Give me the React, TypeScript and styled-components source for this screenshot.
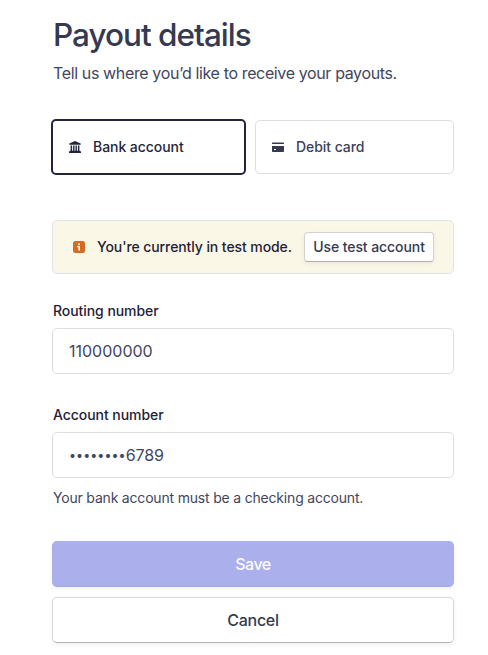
import React from 'react';
import styled, { createGlobalStyle, css } from 'styled-components';

const GlobalStyle = createGlobalStyle`
  * { box-sizing: border-box; }
  body { margin: 0; background: #fff; }
  button, input { font: inherit; color: inherit; margin: 0; letter-spacing: inherit; }
`;

const Page = styled.main`
  width: 488px;
  height: 655px;
  padding: 14px 34px 0 52px;
  overflow: hidden;
  display: flex;
  flex-direction: column;
  background: #fff;
  color: #353a50;
  font-family: Inter, 'Liberation Sans', sans-serif;
`;

const Title = styled.h1`
  margin: 0 0 0 1px;
  font-size: 31.5px;
  line-height: 42px;
  font-weight: 500;
  letter-spacing: -1px;
  color: #353a50;
  white-space: nowrap;
`;

const Subtitle = styled.p`
  margin: 5px 0 0 1px;
  font-size: 16px;
  line-height: 24px;
  letter-spacing: -0.37px;
  color: #414660;
  white-space: nowrap;
`;

const Methods = styled.div`
  display: flex;
  gap: 9px;
  margin: 34px 0 0 -1px;
  height: 56px;
  align-items: center;
`;

const Method = styled.button<{ $selected?: boolean }>`
  display: flex;
  align-items: center;
  gap: 12px;
  border-radius: 5px;
  background: #fff;
  font-size: 14px;
  font-weight: 500;
  letter-spacing: -0.06px;
  white-space: nowrap;
  ${({ $selected }) =>
    $selected
      ? css`
          width: 195px;
          height: 56px;
          padding: 0 0 1px 16px;
          border: 2px solid #23263b;
          color: #23263b;
        `
      : css`
          width: 199px;
          height: 54px;
          padding: 0 0 1px 16px;
          border: 1px solid #dddee1;
          color: #3c4257;
        `}
`;

const Notice = styled.div`
  display: flex;
  align-items: center;
  height: 54px;
  margin-top: 45px;
  padding: 0 19px 0 20px;
  border: 1px solid #e0e3e8;
  border-radius: 5px;
  background: #fbf7e6;
  color: #1f2238;
  font-size: 14px;
  font-weight: 500;
  letter-spacing: -0.09px;
  white-space: nowrap;
`;

const NoticeText = styled.span`
  margin-left: 12px;
  padding-bottom: 1px;
  flex: 1;
`;

const SmallButton = styled.button`
  width: 130px;
  height: 30px;
  padding: 0 0 1px;
  border: 1px solid #d3d2cd;
  border-bottom-color: #b0afad;
  border-radius: 4px;
  background: #fff;
  box-shadow: 0 2px 4px rgba(60, 66, 87, 0.08);
  color: #353a50;
  letter-spacing: -0.08px;
  white-space: nowrap;
`;

const Field = styled.label<{ $top: number }>`
  display: flex;
  flex-direction: column;
  margin-top: ${({ $top }) => $top}px;
`;

const Label = styled.span`
  margin-left: 1px;
  font-size: 14px;
  line-height: 20px;
  font-weight: 500;
  letter-spacing: -0.06px;
  color: #1f2238;
`;

const inputBox = css`
  height: 46px;
  margin-top: 7px;
  padding: 0 16px;
  border: 1px solid #dddee1;
  border-radius: 5px;
  background: #fff;
  font-size: 16px;
  color: #414660;
  outline: none;
`;

const Input = styled.input`
  ${inputBox}
`;

const MaskedInput = styled.div`
  ${inputBox}
  display: flex;
  align-items: center;
  letter-spacing: -0.1px;
`;

const Mask = styled.span`
  font-size: 12.5px;
  letter-spacing: 0.05px;
`;

const Hint = styled.p`
  margin: 10px 0 0 1px;
  font-size: 14px;
  line-height: 20px;
  letter-spacing: -0.19px;
  color: #414660;
`;

const Action = styled.button<{ $primary?: boolean }>`
  height: 46px;
  flex: none;
  margin-top: ${({ $primary }) => ($primary ? 33 : 10)}px;
  border: 1px solid ${({ $primary }) => ($primary ? '#abb0ed' : '#d5d6d9')};
  border-bottom-color: ${({ $primary }) => ($primary ? '#a4a9e6' : '#b2b4b7')};
  border-radius: 5px;
  background: ${({ $primary }) => ($primary ? '#abb0ed' : '#fff')};
  box-shadow: 0 2px 4px rgba(60, 66, 87, 0.07);
  color: ${({ $primary }) => ($primary ? '#fafaff' : '#353a50')};
  font-size: 16px;
  font-weight: 500;
  letter-spacing: ${({ $primary }) => ($primary ? '-0.5px' : '-0.3px')};
`;

const BankIcon = () => (
  <svg width="12" height="12" viewBox="0 0 12 12" fill="#23263b">
    <path d="M6 0 .3 2.4v1.4h11.4V2.4zM1.6 4.4h1.5V10H1.6zM4.1 4.4h1.4V10H4.1zM6.5 4.4h1.4V10H6.5zM8.9 4.4h1.5V10H8.9zM1 9.8h10l1 1V12H0v-1.2z" />
  </svg>
);

const CardIcon = () => (
  <svg width="12" height="12" viewBox="0 0 12 12" fill="#353a50">
    <path d="M0 3V2.2Q0 1.5.7 1.5h10.6q.7 0 .7.7V3z" />
    <path fillRule="evenodd" d="M0 5h12v5.3q0 .7-.7.7H.7Q0 11 0 10.3zM2 8v1h2V8z" />
  </svg>
);

const InfoIcon = () => (
  <svg width="12" height="12" viewBox="0 0 12 12">
    <rect width="12" height="12" rx="2.5" fill="#d56b20" />
    <circle cx="6" cy="3.2" r="1" fill="#fff" />
    <path d="M4 5h3v4.5H5.4V6.3H4z" fill="#fff" />
  </svg>
);

export default function App() {
  return (
    <>
      <GlobalStyle />
      <Page>
        <Title>Payout details</Title>
        <Subtitle>Tell us where you’d like to receive your payouts.</Subtitle>
        <Methods>
          <Method $selected><BankIcon />Bank account</Method>
          <Method><CardIcon />Debit card</Method>
        </Methods>
        <Notice>
          <InfoIcon />
          <NoticeText>You're currently in test mode.</NoticeText>
          <SmallButton>Use test account</SmallButton>
        </Notice>
        <Field $top={27}><Label>Routing number</Label><Input defaultValue="110000000" /></Field>
        <Field $top={31}><Label>Account number</Label><MaskedInput><Mask>••••••••</Mask>6789</MaskedInput></Field>
        <Hint>Your bank account must be a checking account.</Hint>
        <Action $primary>Save</Action>
        <Action>Cancel</Action>
      </Page>
    </>
  );
}
